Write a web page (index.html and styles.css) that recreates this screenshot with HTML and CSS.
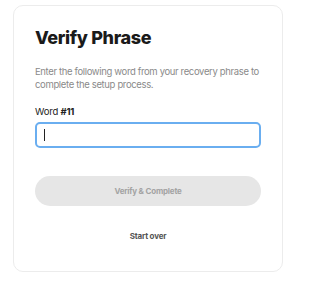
FILE: index.html
```html
<!DOCTYPE html>
<html>
<head>
<meta charset="utf-8">
<link rel="stylesheet" href="styles.css">
</head>
<body>
<div class="card">
  <h1 class="title">Verify Phrase</h1>
  <p class="desc">Enter the following word from your recovery phrase to complete the setup process.</p>
  <label class="label" for="word">Word <b>#11</b></label>
  <div class="input"><span class="caret"></span></div>
  <button class="btn">Verify &amp; Complete</button>
  <div class="link">Start over</div>
</div>
</body>
</html>
```
FILE: styles.css
```css
* { box-sizing: border-box; }
html, body { margin: 0; padding: 0; background: #fff; }
body {
  font-family: Inter, "Noto Sans", sans-serif;
  padding: 5px 17px 0 13px;
}
.card {
  width: 270px;
  height: 267px;
  border: 1px solid #ececec;
  border-radius: 10px;
  padding: 20px 21px 0 21px;
  display: flex;
  flex-direction: column;
}
.title {
  margin: 0;
  font-size: 18px;
  font-weight: 800;
  letter-spacing: -0.35px;
  color: #1a1a1a;
  line-height: 24px;
}
.desc {
  margin: 15.4px 0 0;
  font-size: 9.5px;
  letter-spacing: -0.35px;
  line-height: 13px;
  color: #8a8a8a;
}
.label {
  margin-top: 15px;
  font-size: 9.5px;
  letter-spacing: -0.2px;
  line-height: 12px;
  color: #222;
}
.label b { font-weight: 700; }
.input {
  margin-top: 3.5px;
  height: 26px;
  border: 2px solid #6aaef0;
  border-radius: 5px;
  display: flex;
  align-items: center;
  padding-left: 7px;
}
.caret { width: 1px; height: 12px; background: #222; }
.btn {
  margin-top: 28px;
  height: 30px;
  border: none;
  border-radius: 15px;
  background: #e6e6e6;
  color: #a3a3a3;
  font-family: inherit;
  font-size: 8px;
  letter-spacing: -0.2px;
  font-weight: 700;
  padding: 0;
}
.link {
  margin-top: 25px;
  line-height: 10px;
  text-align: center;
  font-size: 8px;
  letter-spacing: -0.2px;
  font-weight: 700;
  color: #555;
}
```
